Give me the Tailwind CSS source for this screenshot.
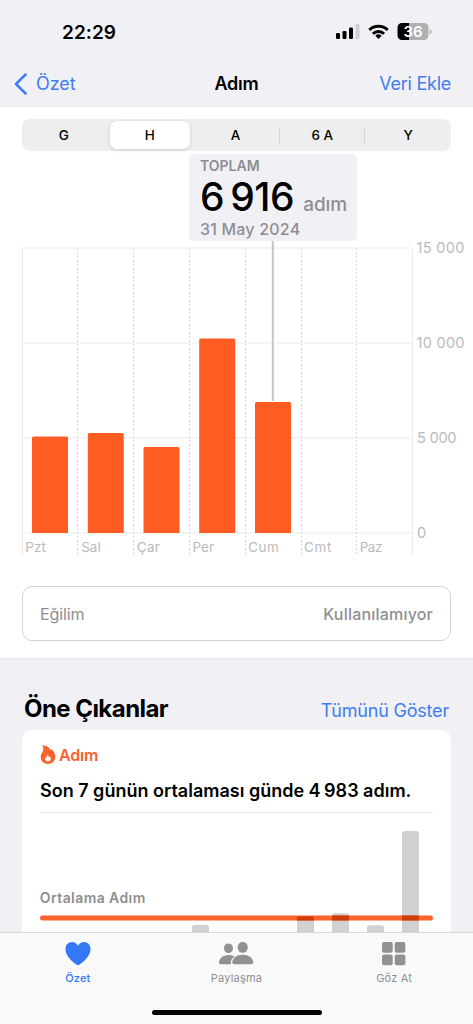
<!DOCTYPE html>
<html lang="tr">
<head>
<meta charset="utf-8">
<title>Adım</title>
<script src="https://cdn.jsdelivr.net/npm/@tailwindcss/browser@4"></script>
</head>
<body class="bg-[#f1f0f5]">
<div class="flex h-[1024px] w-[473px] flex-col overflow-hidden bg-[#f1f0f5] font-['Inter','Liberation_Sans',sans-serif] text-black">

  <header class="flex h-[107px] shrink-0 flex-col border-b border-[#ebebf0]">
    <div class="flex h-[61px] items-end justify-between pr-[40px] pl-[62px]">
      <time class="mb-[16px] text-[19px] leading-[24px] font-semibold tracking-[0.050px]">22:29</time>
      <svg class="mb-[17px]" width="98" height="24" viewBox="335 20 98 24">
        <g>
          <rect x="336" y="33" width="4" height="6" rx="1.2"/>
          <rect x="342.500" y="31" width="4" height="8" rx="1.2"/>
          <rect x="349" y="27.500" width="4" height="11.500" rx="1.2"/>
          <rect x="355.500" y="24" width="4" height="15" rx="1.200" fill="#d0d0d4"/>
        </g>
        <g fill="none" stroke="#000" stroke-width="2.900">
          <path d="M369.300 30a13.300 13.300 0 0 1 18.400 0"/>
          <path d="M372.900 33.700a8.100 8.100 0 0 1 11.200 0"/>
        </g>
        <path d="M378.500 39l-3.100-3.200a4.500 4.500 0 0 1 6.200 0z"/>
        <path d="M402.500 23H424a4.500 4.500 0 0 1 4.500 4.500V35.500a4.500 4.500 0 0 1-4.500 4.500H402.500z" fill="#b0b0b4"/>
        <path d="M409 23V40H402a4.500 4.500 0 0 1-4.500-4.500V27.500A4.500 4.500 0 0 1 402 23z"/>
        <path d="M429.800 29c2.300.8 2.300 4.700 0 5.500z" fill="#b0b0b4"/>
        <text x="413" y="36.900" text-anchor="middle" font-size="15" font-weight="600" fill="#fff">36</text>
      </svg>
    </div>
    <nav class="grid h-[45px] grid-cols-3 items-center pr-[22px] pl-[14px] text-[18px] leading-[24px]">
      <a class="flex items-center gap-[8px] text-[#3f7df0]">
        <svg width="14" height="22" viewBox="0 0 14 22" fill="none" stroke="currentColor" stroke-width="2.500" stroke-linecap="round" stroke-linejoin="round"><path d="M11.500 1.500L2 11l9.500 9.500"/></svg>
        <span class="tracking-[-0.1px]">Özet</span>
      </a>
      <h1 class="text-center font-semibold tracking-[-0.3px]"><span class="ml-[8px]">Adım</span></h1>
      <a class="text-right tracking-[-0.250px] text-[#3f7df0]">Veri Ekle</a>
    </nav>
  </header>

  <main class="flex h-[552px] shrink-0 flex-col border-b border-[#e6e6ea] bg-white pt-[12px]">
    <div class="mx-[22px] grid h-[32px] shrink-0 grid-cols-5 items-center rounded-[8px] bg-[#eeeeee] text-center text-[13.500px] leading-[20px] font-medium">
      <span class="pr-[2px]">G</span>
      <span class="mr-[4px] ml-[2px] flex h-[28px] items-center justify-center rounded-[7px] bg-white shadow-[0_1px_4px_rgba(0,0,0,0.14)]">H</span>
      <span class="pr-[2px]">A</span>
      <span class="border-x border-[#d5d5d7] leading-[17px]">6 A</span>
      <span>Y</span>
    </div>

    <div class="mt-[3px] ml-[189px] flex h-[87px] w-[168px] shrink-0 flex-col rounded-[5px] bg-[#f1f0f5] pt-[3px] pl-[11px] text-[#8e8e92]">
      <span class="h-[18px] text-[14px] leading-[18px] font-semibold">TOPLAM</span>
      <span class="flex h-[44px] items-baseline gap-[9px] leading-[44px]"><b class="text-[39px] font-medium tracking-[-0.4px] whitespace-nowrap text-black [word-spacing:-4px]">6 916</b><span class="text-[19px] font-medium tracking-[-0.1px]">adım</span></span>
      <span class="h-[20px] text-[16px] leading-[20px] font-medium tracking-[0.2px]">31 May 2024</span>
    </div>

    <svg class="shrink-0 overflow-visible" width="473" height="325" viewBox="0 241 473 325">
      <g stroke="#ebebed" stroke-width="1">
        <path d="M22 248H412M22 343H412M22 438H412M22 533H412M22.500 248V556M412.500 248V556"/>
      </g>
      <path d="M77.500 248V556M133.500 248V556M189.500 248V556M245.500 248V556M301.500 248V556M356.500 248V556" stroke="#dadadc" stroke-dasharray="2 2"/>
      <path d="M272.800 241V401" stroke="#c6c6c9" stroke-width="2"/>
      <g fill="#ff5c24">
        <path d="M32 533V438q0-1.500 1.500-1.500h33q1.500 0 1.500 1.500V533z"/>
        <path d="M87.800 533V434.500q0-1.500 1.500-1.500h33q1.500 0 1.500 1.500V533z"/>
        <path d="M143.500 533V448.500q0-1.500 1.500-1.500h33q1.500 0 1.500 1.500V533z"/>
        <path d="M199.200 533V340q0-1.500 1.500-1.500h33q1.500 0 1.500 1.500V533z"/>
        <path d="M255 533V403.500q0-1.500 1.500-1.500h33q1.500 0 1.500 1.500V533z"/>
      </g>
      <g fill="#bababc" font-size="13.500">
        <text x="25.300" y="552.300" textLength="20.500">Pzt</text>
        <text x="81.200" y="552.300" textLength="19.500">Sal</text>
        <text x="136.800" y="552.300" textLength="23">Çar</text>
        <text x="192.500" y="552.300" textLength="21.500">Per</text>
        <text x="248.300" y="552.300" textLength="30.500">Cum</text>
        <text x="304" y="552.300" textLength="27.500">Cmt</text>
        <text x="359.700" y="552.300" textLength="22.700">Paz</text>
      </g>
      <g fill="#bababc" font-size="14.500">
        <text x="416.500" y="253.300" textLength="48">15 000</text>
        <text x="416.500" y="348.300" textLength="48">10 000</text>
        <text x="417" y="443.300" textLength="39.500">5 000</text>
        <text x="417" y="538.300">0</text>
      </g>
    </svg>

    <div class="mx-[22px] mt-[20px] flex h-[55px] shrink-0 items-center justify-between rounded-[10px] border border-[#d3d3d5] px-[17px] text-[16px] leading-[20px] text-[#8e8e90]">
      <span class="tracking-[-0.1px]">Eğilim</span>
      <span class="font-medium tracking-[0.2px]">Kullanılamıyor</span>
    </div>
  </main>

  <section class="flex h-[273px] shrink-0 flex-col overflow-hidden px-[22px]">
    <div class="flex h-[71px] shrink-0 items-end justify-between pr-[2px] pl-[2px]">
      <h2 class="mb-[6px] text-[24px] leading-[30px] font-bold tracking-[-0.550px]">Öne Çıkanlar</h2>
      <a class="mb-[7px] text-[18px] leading-[24px] tracking-[-0.2px] text-[#3f7df0]">Tümünü Göster</a>
    </div>
    <article class="flex h-[260px] shrink-0 flex-col rounded-[10px] bg-white px-[18px]">
      <div class="mt-[14px] flex h-[22px] items-center gap-[3px] text-[16px] font-semibold tracking-[-0.2px] text-[#fa632c]">
        <svg width="16" height="20" viewBox="40 745 16 20"><path d="M42.200 745.600c4-.3 7.400 1.500 8.500 4.700.3-.4.500-.8.600-1.300 2.600 2.200 4.100 4.900 3.900 7.900-.2 4.200-3.400 7.100-7.400 7.100s-7.100-2.900-7.100-6.900c0-2.300 1-3.800 1.900-5.400.9-1.900 1-4.100-.4-6.100z" fill="#fa632c"/><path d="M48 754.500c.4 1 .5 1.800.3 2.600.6-.1 1-.4 1.300-.9.900 1 1.300 2 1.100 2.900-.2 1.500-1.300 2.300-2.800 2.300-1.600 0-2.800-1-2.800-2.500 0-.9.300-1.400.9-1.900.1.500.3.700.7.800 0-1.300.3-2.400 1.300-3.300z" fill="#fff"/></svg>
        <span class="leading-[20px]">Adım</span>
      </div>
      <h3 class="mt-[13px] h-[34px] border-b border-[#e6e6e8] pt-px text-[18px] leading-[22px] font-semibold whitespace-nowrap">Son 7 günün ortalaması günde 4<span class="ml-[2px]">&#8202;983 adım.</span></h3>
      <svg class="-mt-px" width="393" height="121" viewBox="40 812 393 121">
        <text x="39.800" y="903" font-size="14" font-weight="600" fill="#8e8e90" textLength="105.500">Ortalama Adım</text>
        <g fill="#d1d1d4">
          <rect x="192" y="924.700" width="17" height="20" rx="2.500"/>
          <rect x="297" y="916.500" width="17" height="30" rx="2.500"/>
          <rect x="332" y="913.300" width="17" height="30" rx="2.500"/>
          <rect x="367" y="925.300" width="17" height="20" rx="2.500"/>
          <rect x="402" y="831" width="17" height="120" rx="2.500"/>
        </g>
        <rect x="40" y="915.500" width="393" height="5" rx="2.500" fill="#fd622a"/>
        <path d="M297 917.500q.5-1 2-1h13q1.500 0 2 1v3h-17zM332 915.500h17v5h-17zM402 915.500h17v5h-17z" fill="#cf3c0c"/>
      </svg>
    </article>
  </section>

  <footer class="flex h-[92px] shrink-0 flex-col items-center border-t border-[#d8d8dc] bg-[#f9f9f9]">
    <nav class="grid h-[76px] w-full shrink-0 grid-cols-3 text-center text-[11px] leading-[14px] text-[#8f8f91]">
      <a class="mr-[2px] flex flex-col items-center gap-[4px] pt-[6px] text-[#3478f6]">
        <svg width="26" height="28" viewBox="65 939 26 28"><path d="M78 965.200c-1 0-12.500-7.500-12.500-16 0-4.300 2.800-7.200 6.500-7.200 2.700 0 4.800 1.500 6 3.800 1.200-2.300 3.300-3.800 6-3.800 3.700 0 6.500 2.900 6.500 7.200 0 8.500-11.500 16-12.500 16z" fill="currentColor"/></svg>
        <span class="font-medium tracking-[0.2px]">Özet</span>
      </a>
      <a class="flex flex-col items-center gap-[4px] pt-[6px]">
        <svg width="36" height="28" viewBox="218 939 36 28" fill="#919193"><ellipse cx="228.500" cy="948.300" rx="4.500" ry="4.900"/><path d="M219 962.500c0-4 4-7.600 9.500-7.600 2.600 0 4.500.6 6 1.700-2.700 2-4 4.400-3.700 7.600h-10.300q-1.500 0-1.500-1.700z"/><ellipse cx="242.700" cy="947.300" rx="5.100" ry="5.500"/><path d="M232.300 962.200c0-4 4.300-7.500 10.400-7.500s10.500 3.500 10.500 7.500q0 2-2 2h-16.900q-2 0-2-2z"/></svg>
        <span class="tracking-[0.2px]">Paylaşma</span>
      </a>
      <a class="flex flex-col items-center gap-[4px] pt-[6px]">
        <svg width="26" height="28" viewBox="381 939 26 28" fill="#919193"><rect x="382" y="942" width="10.700" height="10.700" rx="2"/><rect x="394.700" y="942" width="10.700" height="10.700" rx="2"/><rect x="382" y="954.500" width="10.700" height="10.700" rx="2"/><rect x="394.700" y="954.500" width="10.700" height="10.700" rx="2"/></svg>
        <span class="tracking-[0.2px]">Göz At</span>
      </a>
    </nav>
    <div class="mt-[1px] h-[5px] w-[170px] shrink-0 rounded-full bg-black"></div>
  </footer>
</div>
</body>
</html>
